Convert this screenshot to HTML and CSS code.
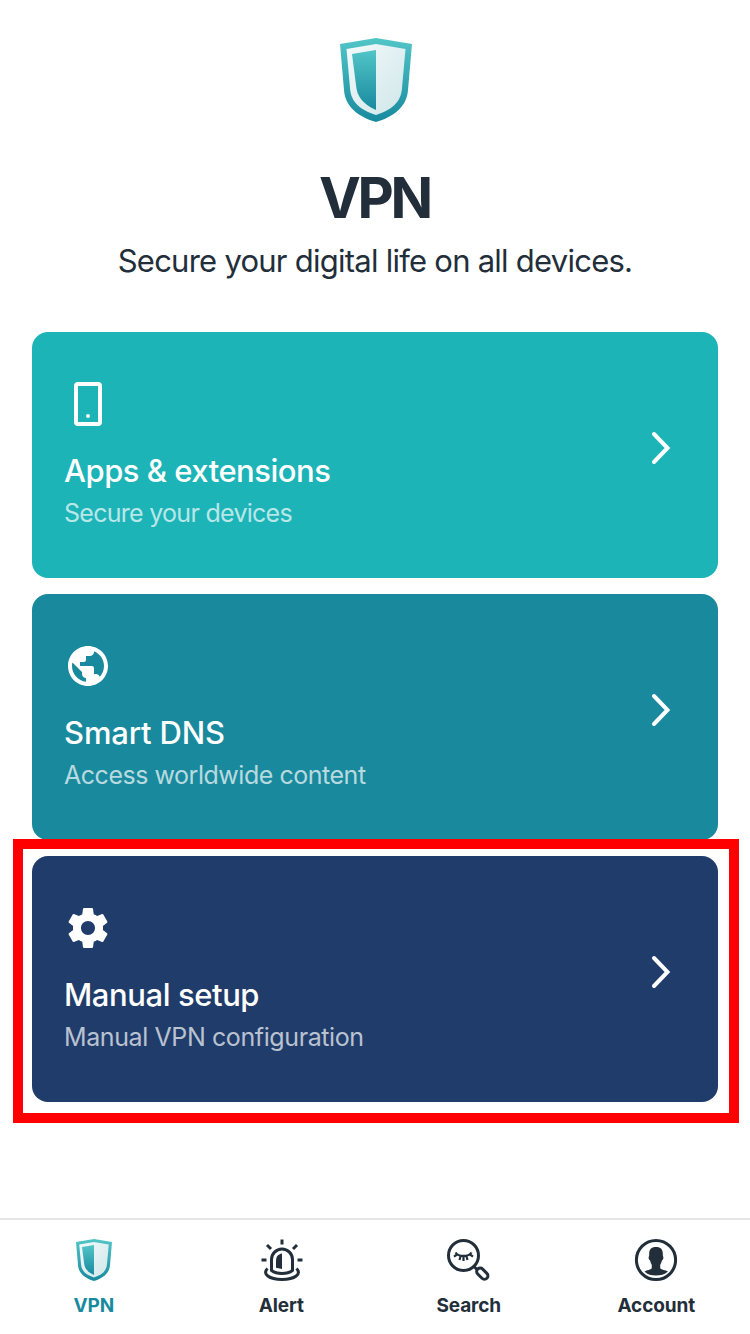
FILE: index.html
```html
<!DOCTYPE html>
<html lang="en">
<head>
<meta charset="utf-8">
<title>VPN</title>
<link rel="stylesheet" href="styles.css">
</head>
<body>
<svg class="defs" width="0" height="0" aria-hidden="true">
  <defs>
    <linearGradient id="teal" x1="0" y1="0" x2="0" y2="1"><stop offset="0" stop-color="#52c5c7"/><stop offset="1" stop-color="#188a9f"/></linearGradient>
    <linearGradient id="pale" x1="0" y1="0" x2="1" y2="1"><stop offset="0" stop-color="#f3fafb"/><stop offset="1" stop-color="#cfe6e9"/></linearGradient>
    <symbol id="shield" viewBox="0 0 72 84">
      <path fill="url(#teal)" d="M0 6 36 0l36 6-4 46c-1 17-15 27-32 32C19 79 5 69 4 52z"/>
      <path fill="url(#pale)" d="M6.500 11 36 6l29.500 5-3.500 39c-1 15-11 22-26 27C21 72 11 65 10 50z"/>
      <path fill="url(#teal)" d="M12 16l24-4v60C23 66 17 59 16 47z"/>
    </symbol>
  </defs>
</svg>
<main class="screen">
  <header class="hero">
    <svg class="logo"><use href="#shield"/></svg>
    <h1 class="title">VPN</h1>
    <p class="subtitle">Secure your digital life on all devices.</p>
  </header>
  <section class="cards">
    <a class="card card-apps">
      <div class="card-body">
        <svg class="card-icon" viewBox="0 0 48 48"><rect x="12" y="4" width="24" height="40" rx="2" fill="none" stroke="#fff" stroke-width="4"/><circle cx="24" cy="36" r="2" fill="#fff"/></svg>
        <h2 class="card-title t-apps">Apps &amp; extensions</h2>
        <p class="card-text d-apps">Secure your devices</p>
      </div>
      <svg class="chevron" viewBox="0 0 20 34"><path d="M3 3 16.500 17 3 31"/></svg>
    </a>
    <a class="card card-dns">
      <div class="card-body">
        <svg class="card-icon" viewBox="0 0 24 24"><path fill="#fff" d="M12 2C6.480 2 2 6.480 2 12s4.480 10 10 10 10-4.480 10-10S17.520 2 12 2zm-1 17.930c-3.950-.49-7-3.850-7-7.930 0-.62.08-1.210.21-1.790L9 15v1c0 1.100.9 2 2 2v1.930zm6.900-2.540c-.26-.81-1-1.390-1.900-1.390h-1v-3c0-.55-.45-1-1-1H8v-2h2c.55 0 1-.45 1-1V7h2c1.100 0 2-.9 2-2v-.41c2.930 1.190 5 4.060 5 7.410 0 2.080-.8 3.970-2.100 5.390z"/></svg>
        <h2 class="card-title t-dns">Smart DNS</h2>
        <p class="card-text d-dns">Access worldwide content</p>
      </div>
      <svg class="chevron" viewBox="0 0 20 34"><path d="M3 3 16.500 17 3 31"/></svg>
    </a>
    <a class="card card-manual">
      <div class="card-body">
        <svg class="card-icon" viewBox="0 0 24 24"><path fill="#fff" d="M19.430 12.980c.04-.32.07-.64.07-.98s-.03-.66-.07-.98l2.110-1.650c.19-.15.24-.42.12-.64l-2-3.460c-.12-.22-.39-.3-.61-.22l-2.490 1c-.52-.4-1.080-.73-1.690-.98l-.38-2.650C14.460 2.180 14.250 2 14 2h-4c-.25 0-.46.18-.49.42l-.38 2.650c-.61.25-1.170.59-1.690.98l-2.490-1c-.23-.09-.49 0-.61.22l-2 3.460c-.13.22-.07.49.12.64l2.110 1.650c-.04.32-.07.65-.07.98s.03.66.07.98l-2.110 1.650c-.19.15-.24.42-.12.64l2 3.460c.12.22.39.3.61.22l2.490-1c.52.4 1.080.73 1.690.98l.38 2.650c.03.24.24.42.49.42h4c.25 0 .46-.18.49-.42l.38-2.650c.61-.25 1.170-.59 1.690-.98l2.490 1c.23.09.49 0 .61-.22l2-3.460c.12-.22.07-.49-.12-.64l-2.110-1.650zM12 15.500c-1.930 0-3.500-1.570-3.500-3.500s1.570-3.500 3.500-3.500 3.500 1.570 3.500 3.500-1.570 3.500-3.500 3.500z"/></svg>
        <h2 class="card-title t-manual">Manual setup</h2>
        <p class="card-text d-manual">Manual VPN configuration</p>
      </div>
      <svg class="chevron" viewBox="0 0 20 34"><path d="M3 3 16.500 17 3 31"/></svg>
      <span class="highlight"></span>
    </a>
  </section>
  <nav class="tabs">
    <a class="tab tab-active">
      <svg class="tab-icon" viewBox="0 0 42 42"><use href="#shield" x="3" y="0" width="36" height="42"/></svg>
      <span class="tab-label">VPN</span>
    </a>
    <a class="tab">
      <svg class="tab-icon line" viewBox="-1 0 42 42"><path d="M10.500 31.500V20.500a10.500 10.500 0 0 1 21 0v11c-5.500 4-15.500 4-21 0z"/><path d="M6.500 29.500C1 35 8 40.500 21 40.500S41 35 35.500 29.500M21 .5v5M6 6l4 4M36 6l-4 4M.5 21h5M36.500 21h5"/><path class="solid" d="M21 14.500v15.500l-6-1.200v-6.800c0-4.500 2-6.700 6-7.500z"/></svg>
      <span class="tab-label">Alert</span>
    </a>
    <a class="tab">
      <svg class="tab-icon line" viewBox="1 0 42 42"><circle cx="16.500" cy="16.500" r="15"/><path d="m26.500 27 3.500 3.500"/><rect x="28.800" y="31.200" width="13" height="7" rx="3.500" transform="rotate(45 35.300 34.700)"/><path class="lashes" d="M8.500 13.500c3 4.600 13 4.600 16 0M10 15.500l-3 2.200M23 15.500l3 2.200M13.500 17.500l-1 3.500M16.500 17.500v4.500M19.500 17.500l1 3.500"/></svg>
      <span class="tab-label">Search</span>
    </a>
    <a class="tab">
      <svg class="tab-icon line" viewBox="0 0 42 42"><circle cx="21" cy="21" r="19.600"/><path class="solid" d="M21 8c5.300 0 7.200 2.500 6.800 9 1 .3.700 4-.9 4.500-.4 2.200-1.400 3.600-1.700 4.500v3c1 2 5.300 2 7.800 3.500C29.500 35.500 25.500 36.500 21 36.500S12.500 35.500 9.500 32.500c2.500-1.500 6.300-1.500 7.300-3.500v-3c-.3-.9-1.300-2.300-1.700-4.500-1.600-.5-1.900-4.200-.9-4.500C13.800 10.500 15.700 8 21 8z"/></svg>
      <span class="tab-label">Account</span>
    </a>
  </nav>
</main>
</body>
</html>
```
FILE: styles.css
```css
* { box-sizing: border-box; }
body { margin: 0; background: #fff; color: #222e3a; font-family: Inter, "Liberation Sans", sans-serif; }
h1, h2, p { margin: 0; font-weight: 400; white-space: nowrap; }
.defs { position: absolute; }
.screen { display: flex; flex-direction: column; width: 750px; height: 1334px; overflow: hidden; }
.hero { display: flex; flex-direction: column; align-items: center; height: 332px; padding-top: 38px; flex: none; }
.logo { display: block; width: 72px; height: 84px; margin-left: 2px; }
.title { margin-top: 44px; font-size: 56px; line-height: 64px; font-weight: 700; letter-spacing: -3.2px; padding-right: 1px; }
.subtitle { margin-top: 11px; font-size: 31px; line-height: 40px; letter-spacing: -0.75px; }
.cards { display: flex; flex-direction: column; gap: 16px; padding: 0 32px; flex: 1; }
.card { position: relative; display: flex; align-items: center; justify-content: space-between; height: 246px; padding: 0 47px 0 32px; border-radius: 16px; color: #fff; flex: none; }
.card-apps { background: #1db4b8; }
.card-dns { background: #19899d; }
.card-manual { background: #203c6a; }
.card-body { display: flex; flex-direction: column; align-items: flex-start; height: 150px; }
.card-icon { display: block; width: 48px; height: 48px; }
.card-title { margin-top: 23px; font-size: 31px; line-height: 40px; font-weight: 500; }
.card-text { margin-top: 6px; font-size: 25px; line-height: 32px; color: rgba(255, 255, 255, .7); }
.t-apps { letter-spacing: -0.5px; }
.t-dns { letter-spacing: -0.15px; }
.t-manual { letter-spacing: -0.42px; }
.d-apps { letter-spacing: -0.72px; }
.d-dns { letter-spacing: -0.47px; }
.d-manual { letter-spacing: -0.4px; }
.chevron { display: block; width: 20px; height: 34px; margin-bottom: 14px; fill: none; stroke: #fff; stroke-width: 4; stroke-linecap: round; stroke-linejoin: miter; }
.highlight { position: absolute; top: -17px; right: -21px; bottom: -21px; left: -19px; border: 10px solid #f00; }
.tabs { display: grid; grid-template-columns: repeat(4, 1fr); height: 116px; border-top: 2px solid #e6e6e6; flex: none; }
.tab { display: flex; flex-direction: column; align-items: center; padding-top: 19px; font-size: 19px; font-weight: 700; }
.tab-active { color: #188a9e; }
.tab-icon { display: block; width: 42px; height: 42px; overflow: visible; }
.tab-label { margin-top: 13px; line-height: 24px; letter-spacing: -0.1px; }
.line { fill: none; stroke: #222e3a; stroke-width: 3; stroke-linecap: butt; stroke-linejoin: round; }
.solid { fill: #222e3a; stroke: none; }
.lashes { stroke-width: 2.2; }
```
